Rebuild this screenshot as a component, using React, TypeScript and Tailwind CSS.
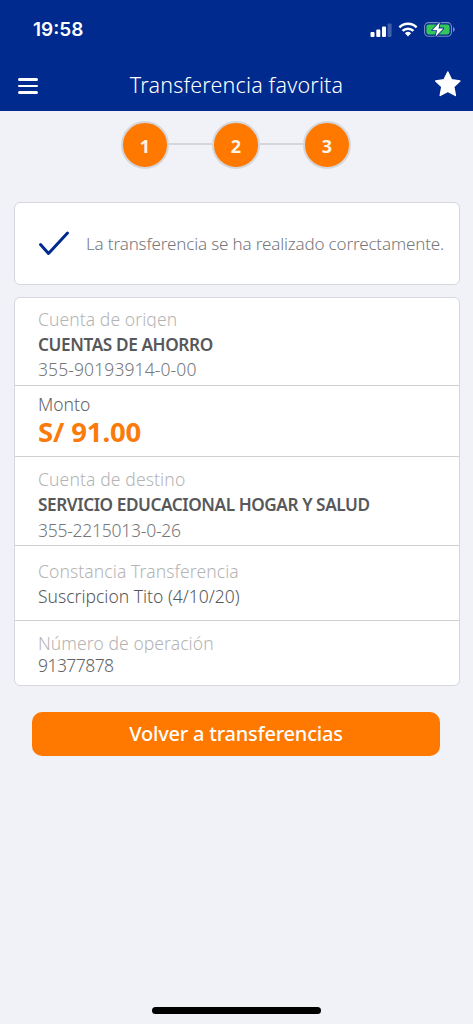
import React from 'react';
import clsx from 'clsx';

interface Line {
  text: string;
  className: string;
}

interface Section {
  id: string;
  className: string;
  lines: Line[];
}

const steps = [1, 2, 3];

const sections: Section[] = [
  {
    id: 'origin',
    className: 'h-[88px] pt-[9px]',
    lines: [
      { text: 'Cuenta de origen', className: 'h-[21px] mb-1 overflow-hidden text-[#b4b4b4] font-light tracking-[0.08px]' },
      { text: 'CUENTAS DE AHORRO', className: 'h-[25px] text-[17.2px] text-[#57585a] font-semibold tracking-[-0.39px]' },
      { text: '355-90193914-0-00', className: 'h-[25px] text-[#77787a] font-light tracking-[0.1px]' },
    ],
  },
  {
    id: 'amount',
    className: 'h-[71px] pt-[6px]',
    lines: [
      { text: 'Monto', className: 'h-[25px] text-[#626365] font-light' },
      { text: 'S/ 91.00', className: 'h-[34px] leading-[30px] text-[27.5px] text-[#fa7a0a] font-bold tracking-[-0.15px]' },
    ],
  },
  {
    id: 'destination',
    className: 'h-[89px] pt-[10px]',
    lines: [
      { text: 'Cuenta de destino', className: 'h-[25px] text-[#b4b4b4] font-light tracking-[0.13px]' },
      { text: 'SERVICIO EDUCACIONAL HOGAR Y SALUD', className: 'h-[26px] text-[17.2px] text-[#57585a] font-semibold tracking-[-0.43px]' },
      { text: '355-2215013-0-26', className: 'h-[25px] text-[#77787a] font-light tracking-[-0.25px]' },
    ],
  },
  {
    id: 'note',
    className: 'h-[75px] pt-[13px]',
    lines: [
      { text: 'Constancia Transferencia', className: 'h-[25px] text-[#b4b4b4] font-light tracking-[0.1px]' },
      { text: 'Suscripcion Tito (4/10/20)', className: 'h-[25px] text-[#57585a] font-light' },
    ],
  },
  {
    id: 'operation',
    className: 'h-[64px] pt-[10px]',
    lines: [
      { text: 'Número de operación', className: 'h-[22px] overflow-hidden text-[#b4b4b4] font-light tracking-[0.08px]' },
      { text: '91377878', className: 'h-[25px] text-[#626365] font-light tracking-[-0.55px]' },
    ],
  },
];

const SignalIcon = () => (
  <svg width="22" height="14" viewBox="0 0 22 14" fill="#fff">
    <rect x="0.5" y="9" width="4" height="5" rx="1" />
    <rect x="6.3" y="6.5" width="4" height="7.5" rx="1" />
    <rect x="12" y="3.5" width="4" height="10.5" rx="1" />
    <rect x="17.6" y="0.5" width="4" height="13.5" rx="1" opacity="0.25" />
  </svg>
);

const WifiIcon = () => (
  <svg width="20" height="15" viewBox="0 0 20 15" fill="none" stroke="#fff" strokeWidth="2.5">
    <path d="M1.4 5.3a12.3 12.3 0 0 1 17.2 0" />
    <path d="M4.6 8.9a7.7 7.7 0 0 1 10.8 0" />
    <path d="M10 14.4 6.9 11.3a4.5 4.5 0 0 1 6.2 0z" fill="#fff" stroke="none" />
  </svg>
);

const BatteryIcon = () => (
  <svg width="31" height="17" viewBox="0 0 31 17">
    <rect x="0.6" y="1.6" width="26.8" height="13.6" rx="4" fill="none" stroke="#7a8cc4" strokeWidth="1.1" />
    <rect x="2.4" y="3.4" width="23.2" height="10" rx="2.4" fill="#35c759" />
    <path d="M29 6v5c1-.4 1.7-1.3 1.7-2.5S30 6.4 29 6z" fill="#8a83cf" />
    <path
      d="M15.9 1 8.2 9.3h4.9l-1.7 6.5 8-8.4h-4.9z"
      fill="#fff"
      stroke="#002a8d"
      strokeWidth="1.6"
      paintOrder="stroke"
      strokeLinejoin="round"
    />
  </svg>
);

const App: React.FC = () => {
  return (
    <div className="flex h-[1024px] w-[473px] flex-col overflow-hidden bg-[#f1f2f8] font-['Noto_Sans',sans-serif] text-[17.5px]">
      {/* Status bar and title */}
      <header className="h-[111px] shrink-0 bg-[#002a8d] text-white">
        <div className="flex h-[59px] items-center justify-between pr-[18px] pl-[33px]">
          <span className="font-['Inter',sans-serif] text-[19px] leading-6 font-semibold">19:58</span>
          <div className="flex items-center gap-[6px]">
            <SignalIcon />
            <WifiIcon />
            <BatteryIcon />
          </div>
        </div>
        <div className="flex h-[52px] items-center justify-between pr-[12px] pl-[18px]">
          <button className="flex w-5 flex-col gap-[4px] pt-[2px]" aria-label="Menú">
            <span className="h-[2.5px] w-5 rounded-sm bg-white" />
            <span className="h-[2.5px] w-5 rounded-sm bg-white" />
            <span className="h-[2.5px] w-5 rounded-sm bg-white" />
          </button>
          <h1 className="pb-px text-[21.5px] leading-7 font-light tracking-[0.18px] whitespace-nowrap">Transferencia favorita</h1>
          <svg className="-mt-[3px]" width="26" height="26" viewBox="0 0 26 26" fill="#fff" stroke="#fff" strokeWidth="1.4" strokeLinejoin="round">
            <path d="M12.8 1l3.8 7.8 8.3 1.1-6.1 5.9 1.6 8.7-7.6-4.1-7.6 4.1 1.6-8.7L.7 9.9 9 8.8z" />
          </svg>
        </div>
      </header>

      {/* Steps */}
      <div className="mt-[10px] flex h-12 items-center justify-center pr-px">
        {steps.map((step, index) => (
          <React.Fragment key={step}>
            {index > 0 && <span className="-mt-[2px] h-[2px] w-[43px] bg-[#d5d6da]" />}
            <span className="flex size-[48px] items-center justify-center rounded-full border-[2.5px] border-[#d5d6da] bg-[#ff7800] pt-[2px] text-lg font-bold text-[#fff5e6]">
              {step}
            </span>
          </React.Fragment>
        ))}
      </div>

      {/* Confirmation */}
      <div className="mt-[33px] mr-[13px] ml-[14px] flex h-[83px] shrink-0 items-center rounded-md border border-[#d6d7de] bg-white pb-[2px] pl-[23px]">
        <svg width="32" height="26" viewBox="0 0 32 26" fill="none" stroke="#002a8d" strokeWidth="3" strokeLinecap="round" strokeLinejoin="round">
          <path d="M2.5 14.5 10.5 23.5 29.5 3" />
        </svg>
        <p className="ml-[16px] pt-[2px] text-[17px] leading-6 font-light tracking-[-0.15px] whitespace-nowrap text-[#77787a]">
          La transferencia se ha realizado correctamente.
        </p>
      </div>

      {/* Details */}
      <div className="mt-3 mr-[13px] ml-[14px] shrink-0 rounded-md border border-[#d6d7de] bg-white">
        {sections.map((section, index) => (
          <div
            key={section.id}
            className={clsx(
              'pl-[23px] leading-[25px] whitespace-nowrap',
              index < sections.length - 1 && 'border-b border-[#cfd0d2]',
              section.className,
            )}
          >
            {section.lines.map((line) => (
              <p key={line.text} className={line.className}>
                {line.text}
              </p>
            ))}
          </div>
        ))}
      </div>

      <button className="mr-[33px] ml-8 mt-[26px] h-11 shrink-0 rounded-[10px] bg-[#ff7800] pb-px text-[20px] font-medium tracking-[-0.22px] text-white">
        Volver a transferencias
      </button>

      {/* Home indicator */}
      <div className="mt-auto mb-[10px] h-[7px] w-[169px] self-center rounded-full bg-black" />
    </div>
  );
};

export default App;
